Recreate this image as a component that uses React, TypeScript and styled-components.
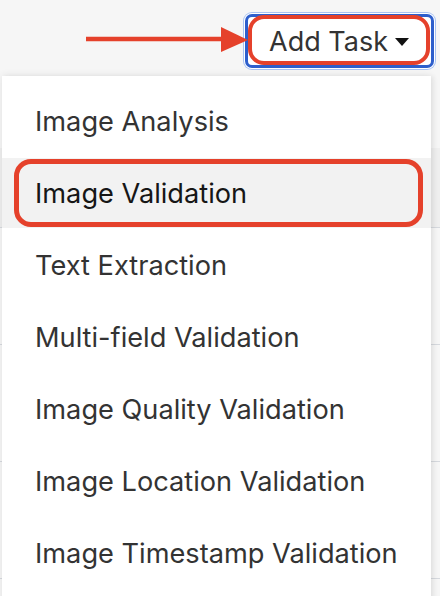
import React from "react";
import styled, { createGlobalStyle } from "styled-components";

const GlobalStyle = createGlobalStyle`
  html, body {
    margin: 0;
    padding: 0;
    width: 440px;
    height: 596px;
    overflow: hidden;
    background: #f6f6f6;
    font-family: Inter, "Liberation Sans", Arial, sans-serif;
  }
  * { box-sizing: border-box; }
`;

const Page = styled.div`
  position: relative;
  width: 440px;
  height: 596px;
  overflow: hidden;
  background: #f6f6f6;
`;

const Toolbar = styled.div`
  height: 76px;
  display: flex;
  justify-content: flex-end;
  align-items: flex-start;
  padding: 14px 6px 0 0;
`;

const ArrowWrap = styled.svg`
  display: block;
  margin-top: 12px;
  margin-right: -3px;
  position: relative;
  z-index: 2;
`;

const ToggleButton = styled.button`
  position: relative;
  height: 54px;
  display: flex;
  align-items: center;
  padding: 0 22px 0 21px;
  border: 3px solid #2e5fcc;
  border-radius: 7px;
  background: #fff;
  box-shadow: 0 0 0 1px #fff, 0 0 0 2px #a9c3f3;
  font-family: Inter, "Liberation Sans", Arial, sans-serif;
  font-size: 27px;
  color: #333;
  cursor: pointer;
`;

const Caret = styled.span`
  display: inline-block;
  margin-left: 7px;
  width: 0;
  height: 0;
  border-top: 8px solid #111;
  border-left: 7.5px solid transparent;
  border-right: 7.5px solid transparent;
  margin-top: 1px;
`;

const RedRing = styled.span<{ $radius: number; $inset: string; $width: number }>`
  position: absolute;
  inset: ${(p) => p.$inset};
  border: ${(p) => p.$width}px solid #e5412b;
  border-radius: ${(p) => p.$radius}px;
  pointer-events: none;
`;

const Table = styled.div`
  display: flex;
  flex-direction: column;
  padding-top: 72px;
`;

const HeadRow = styled.div`
  height: 80px;
  background: #efefef;
  border-bottom: 1px solid #d6d9de;
`;

const BodyRow = styled.div`
  height: 117px;
  border-bottom: 1px solid #d6d9de;
`;

const Menu = styled.div`
  position: absolute;
  top: 76px;
  left: 2px;
  width: 429px;
  height: 560px;
  background: #fff;
  box-shadow: 0 0 8px rgba(0, 0, 0, 0.09), 3px 0 4px rgba(0, 0, 0, 0.04);
  padding-top: 10px;
  display: flex;
  flex-direction: column;
  gap: 2px;
  z-index: 1;
`;

const Item = styled.div<{ $active?: boolean }>`
  position: relative;
  height: 70px;
  display: flex;
  align-items: center;
  padding-left: 33px;
  font-size: 27.2px;
  color: ${(p) => (p.$active ? "#161616" : "#333")};
  background: ${(p) => (p.$active ? "#f2f2f2" : "transparent")};
  white-space: nowrap;
`;

const items = [
  "Image Analysis",
  "Image Validation",
  "Text Extraction",
  "Multi-field Validation",
  "Image Quality Validation",
  "Image Location Validation",
  "Image Timestamp Validation",
];

export default function App() {
  return (
    <Page>
      <GlobalStyle />
      <Toolbar>
        <ArrowWrap width="162" height="28" viewBox="0 0 162 28">
          <line x1="0" y1="13" x2="137" y2="13" stroke="#e5412b" strokeWidth="4.5" />
          <polygon points="135,1 162,14 135,26" fill="#e5412b" />
        </ArrowWrap>
        <ToggleButton>
          Add Task
          <Caret />
          <RedRing $radius={16} $width={4} $inset="-2px 1px 0 0" />
        </ToggleButton>
      </Toolbar>
      <Table>
        <HeadRow />
        <BodyRow />
        <BodyRow />
        <BodyRow />
      </Table>
      <Menu>
        {items.map((label, i) => (
          <Item key={label} $active={i === 1}>
            {label}
            {i === 1 && <RedRing $radius={17} $width={5} $inset="1px 8px 1px 12px" />}
          </Item>
        ))}
      </Menu>
    </Page>
  );
}
